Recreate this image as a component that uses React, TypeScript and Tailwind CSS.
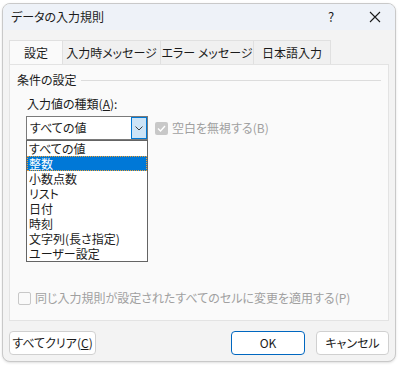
import React from "react";

const items = ["すべての値", "整数", "小数点数", "リスト", "日付", "時刻", "文字列(長さ指定)", "ユーザー設定"];

export default function App() {
  return (
    <div
      className="w-[400px] h-[365px] bg-white pt-[3px] pl-[2px] pr-[4px] pb-[3px] text-[12px] leading-[16px] text-[#1b1b1b] whitespace-nowrap [font-feature-settings:'palt']"
      style={{ fontFamily: '"Noto Sans CJK JP", "Noto Sans", sans-serif' }}
    >
      <div className="flex h-full flex-col overflow-hidden rounded-lg border border-[#c9c9c9] bg-[#f3f3f3] shadow">
        {/* title bar */}
        <div className="flex h-[26px] items-center bg-[#eef2f8] pl-[8px]">
          <span className="flex-1">データの入力規則</span>
          <span className="w-[20px] text-center text-[13px]">?</span>
          <span className="ml-[24px] mr-[10px] flex w-[20px] items-center justify-center">
            <svg width="12" height="12" viewBox="0 0 12 12" stroke="#1b1b1b" strokeWidth="1.1">
              <path d="M1 1L11 11M11 1L1 11" />
            </svg>
          </span>
        </div>

        {/* tabs */}
        <div className="mt-[10px] flex pl-[6px]">
          <div className="flex h-[24px] w-[54px] items-center justify-center border border-b-0 border-[#e0e0e0] bg-[#fafafa]">設定</div>
          <div className="flex h-[24px] w-[98px] items-center justify-center border border-l-0 border-b-0 border-[#e0e0e0] bg-[#f0f0f0]">入力時メッセージ</div>
          <div className="flex h-[24px] w-[93px] items-center justify-center border border-l-0 border-b-0 border-[#e0e0e0] bg-[#f0f0f0]">エラー メッセージ</div>
          <div className="flex h-[24px] w-[77px] items-center justify-center border border-l-0 border-b-0 border-[#e0e0e0] bg-[#f0f0f0]">日本語入力</div>
        </div>

        {/* panel */}
        <div className="mx-[6px] flex h-[257px] flex-col border border-[#e3e3e3] bg-[#fafafa] px-[7px]">
          <div className="mt-[7px] flex items-center">
            <span>条件の設定</span>
            <div className="ml-[4px] h-px flex-1 bg-[#dcdcdc]" />
          </div>
          <div className="ml-[10px] mt-[8px]">
            入力値の種類(<span className="underline">A</span>):
          </div>
          <div className="ml-[9px] mt-[4px] flex">
            <div className="relative">
              <div className="flex h-[24px] w-[122px] items-center border border-[#7a7a7a] bg-white">
                <span className="flex-1 pl-[3px]">すべての値</span>
                <div className="flex h-[22px] w-[16px] items-center justify-center border border-[#0078d4] bg-[#cce4f7]">
                  <svg width="8" height="5" viewBox="0 0 8 5" fill="none" stroke="#404040" strokeWidth="1">
                    <path d="M0.5 0.5L4 4L7.5 0.5" />
                  </svg>
                </div>
              </div>
              <div className="absolute left-0 top-[24px] w-[122px] border border-[#646464] bg-white">
                {items.map((it, i) => (
                  <div
                    key={it}
                    className={
                      i === 1
                        ? "h-[15px] overflow-hidden border border-dotted border-[#f0a030] bg-[#0078d7] pl-[1px] leading-[13px] text-white"
                        : "h-[15px] overflow-hidden pl-[2px] leading-[15px]"
                    }
                  >
                    {it}
                  </div>
                ))}
              </div>
            </div>
            <div className="ml-[7px] flex items-center">
              <div className="flex h-[13px] w-[13px] items-center justify-center rounded-[2px] bg-[#c8c8c8]">
                <svg width="9" height="7" viewBox="0 0 9 7" fill="none" stroke="white" strokeWidth="1.4">
                  <path d="M1 3.5L3.5 6L8 1" />
                </svg>
              </div>
              <span className="ml-[4px] text-[#a0a0a0]">空白を無視する(B)</span>
            </div>
          </div>
          <div className="flex-1" />
          <div className="mb-[14px] flex items-center">
            <div className="ml-[1px] h-[13px] w-[13px] rounded-[2px] border border-[#c8c8c8] bg-[#fafafa]" />
            <span className="ml-[4px] text-[#a0a0a0]">同じ入力規則が設定されたすべてのセルに変更を適用する(P)</span>
          </div>
        </div>

        {/* buttons */}
        <div className="mt-[10px] flex px-[6px]">
          <div className="flex h-[24px] w-[87px] items-center justify-center rounded-[4px] border border-[#d0d0d0] bg-white">
            すべてクリア(<span className="underline">C</span>)
          </div>
          <div className="flex-1" />
          <div className="flex h-[24px] w-[74px] items-center justify-center rounded-[4px] border border-[#0067c0] bg-white">OK</div>
          <div className="ml-[11px] flex h-[24px] w-[73px] items-center justify-center rounded-[4px] border border-[#d0d0d0] bg-white">キャンセル</div>
        </div>
      </div>
    </div>
  );
}
